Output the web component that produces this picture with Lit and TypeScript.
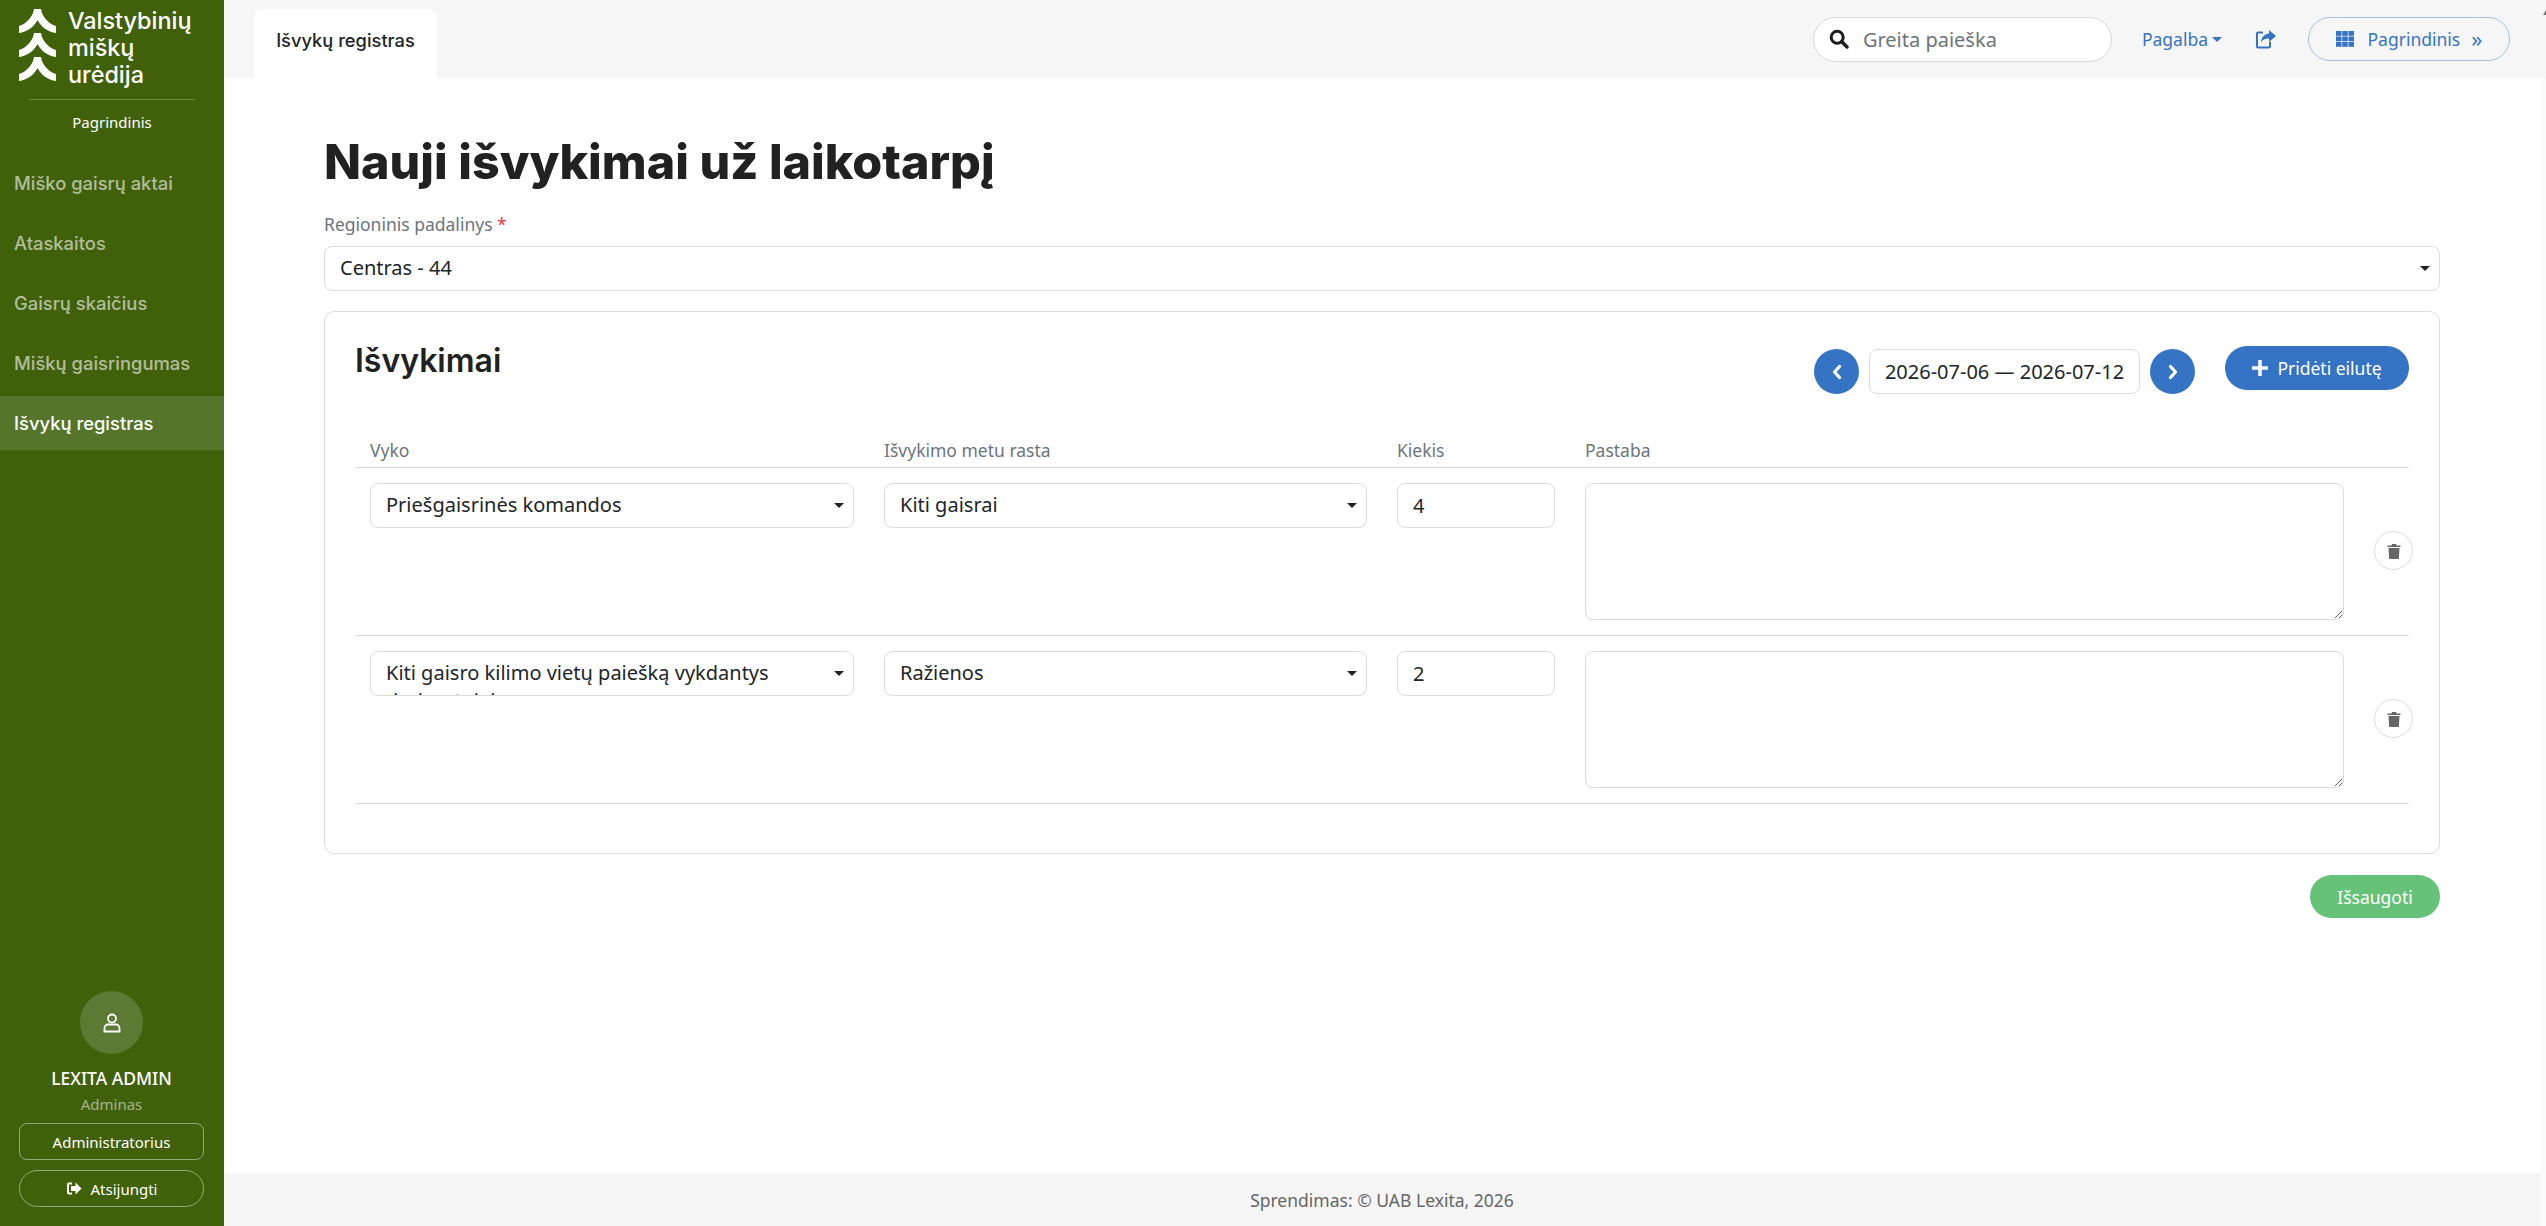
import { LitElement, html, css, svg } from "lit";
import { customElement } from "lit/decorators.js";

interface Row {
  who: string;
  found: string;
  count: string;
}

const ROWS: Array<Row> = [
  { who: "Priešgaisrinės komandos", found: "Kiti gaisrai", count: "4" },
  {
    who: "Kiti gaisro kilimo vietų paiešką vykdantys darbuotojai",
    found: "Ražienos",
    count: "2",
  },
];

const NAV = [
  "Miško gaisrų aktai",
  "Ataskaitos",
  "Gaisrų skaičius",
  "Miškų gaisringumas",
  "Išvykų registras",
];

const chevron = (y: number) =>
  svg`<path transform="translate(0 ${y})" d="M15 0H22C23 8 30 15 37 17V24C29 23 22 18 18.5 11C15 18 8 23 0 24V17C7 15 14 8 15 0Z"/>`;

const logo = html`<svg class="logo-mark" viewBox="0 0 37 72" fill="#fff">
  ${chevron(0)}${chevron(24)}${chevron(48)}
</svg>`;

const searchIcon = html`<svg width="20" height="20" viewBox="0 0 20 20" fill="none" stroke="#1c1c1c">
  <circle cx="8.2" cy="8.2" r="6" stroke-width="3" />
  <path d="M12.8 12.8L18 18" stroke-width="3.4" stroke-linecap="round" />
</svg>`;

const shareIcon = html`<svg width="21" height="19" viewBox="0 0 21 19" fill="#3574c4">
  <path d="M1 3.5A2 2 0 0 1 3 1.5H8V3.5H3V16.5H14V12H16V16.5A2 2 0 0 1 14 18.5H3A2 2 0 0 1 1 16.5Z" />
  <path d="M14 0L21 6L14 12V8.5C10 8.5 7.5 9.5 6 13C6 8 9 4 14 3.5Z" />
</svg>`;

const gridIcon = html`<svg width="18" height="16" viewBox="0 0 18 16" fill="#3574c4">
  ${[0, 5.5, 11].map((y) =>
    [0, 6.25, 12.5].map((x) => svg`<rect x=${x} y=${y} width="5.5" height="4.8" />`)
  )}
</svg>`;

const trashIcon = html`<svg width="14" height="16" viewBox="0 0 14 16" fill="#666">
  <path d="M0.5 2.5H4.5L5 1H9L9.5 2.5H13.5V4H0.5Z" />
  <path d="M1.5 5H12.5L11.8 16H2.2Z" />
</svg>`;

const chevronIcon = (left: boolean) =>
  html`<svg width="12" height="16" viewBox="0 0 12 16" fill="none" stroke="#fff" stroke-width="3.2" stroke-linecap="round" stroke-linejoin="round">
    <path d=${left ? "M8.5 2.5L3.5 8L8.5 13.5" : "M3.5 2.5L8.5 8L3.5 13.5"} />
  </svg>`;

const userIcon = html`<svg width="18" height="20" viewBox="0 0 18 20" fill="none" stroke="#fff" stroke-width="1.8">
  <circle cx="9" cy="5.5" r="4" />
  <path d="M5 11.5H13A3.5 3.5 0 0 1 16.5 15V18.5H1.5V15A3.5 3.5 0 0 1 5 11.5Z" />
</svg>`;

const logoutIcon = html`<svg width="16" height="13" viewBox="0 0 16 13" fill="#fff">
  <path d="M1 2.5A2 2 0 0 1 3 .5H6V2.5H3V10.5H6V12.5H3A2 2 0 0 1 1 10.5Z" />
  <path d="M9.5 0.5L15.5 6.5L9.5 12.5V9H5V4H9.5Z" />
</svg>`;

const plusIcon = html`<svg width="16" height="16" viewBox="0 0 16 16" fill="#fff">
  <path d="M6.3 0H9.7V6.3H16V9.7H9.7V16H6.3V9.7H0V6.3H6.3Z" />
</svg>`;

@customElement("app-root")
export class AppRoot extends LitElement {
  static styles = css`
    :host {
      display: flex;
      position: relative;
      min-height: 100vh;
      font-family: "Noto Sans", sans-serif;
      font-size: 17.5px;
      color: #212529;
      background: #fafafa;
    }
    * {
      box-sizing: border-box;
    }

    /* sidebar */
    .sidebar {
      width: 224px;
      flex: none;
      height: 1226px;
      display: flex;
      flex-direction: column;
      background: #41600a;
      color: #fff;
    }
    .brand {
      display: flex;
      align-items: flex-start;
      gap: 12px;
      padding: 9px 0 0 19px;
      height: 99px;
    }
    .logo-mark {
      width: 37px;
      height: 72px;
      flex: none;
    }
    .brand-text {
      font-family: Inter, sans-serif;
      font-weight: 500;
      font-size: 23.4px;
      line-height: 27px;
      margin-top: -2px;
    }
    .section {
      margin: 0 29px;
      border-top: 1px solid rgba(255, 255, 255, 0.25);
      padding-top: 11px;
      text-align: center;
      font-size: 15px;
      line-height: 22px;
      height: 57px;
    }
    .nav {
      display: flex;
      flex-direction: column;
      gap: 6px;
    }
    .nav a {
      height: 54px;
      display: flex;
      align-items: center;
      padding-left: 14px;
      font-family: Inter, sans-serif;
      font-weight: 500;
      font-size: 18.4px;
      color: rgba(255, 255, 255, 0.6);
    }
    .nav a.active {
      background: #55752a;
      color: #fff;
    }
    .profile {
      margin-top: auto;
      padding: 0 20px 19px 19px;
      display: flex;
      flex-direction: column;
      align-items: center;
    }
    .avatar {
      width: 63px;
      height: 63px;
      border-radius: 50%;
      background: #5c7a33;
      display: flex;
      align-items: center;
      justify-content: center;
    }
    .name {
      margin-top: 11px;
      font-size: 17.5px;
      font-weight: 500;
      line-height: 26px;
    }
    .role {
      font-size: 15px;
      line-height: 22px;
      margin-top: 2px;
      color: rgba(255, 255, 255, 0.55);
    }
    .side-btn {
      width: 100%;
      height: 37px;
      margin-top: 8px;
      border: 1px solid rgba(255, 255, 255, 0.45);
      border-radius: 8px;
      display: flex;
      align-items: center;
      justify-content: center;
      gap: 9px;
      font-size: 15px;
    }
    .side-btn.pill {
      border-radius: 19px;
      margin-top: 10px;
    }

    /* main column */
    .main {
      width: 2316px;
      flex: none;
      height: 1226px;
      display: flex;
      flex-direction: column;
      background: #fff;
    }
    .topbar {
      height: 78px;
      flex: none;
      margin-right: -6px;
      background: #f6f6f6;
      display: flex;
      align-items: flex-end;
      padding-left: 30px;
    }
    .tab {
      width: 183px;
      height: 69px;
      background: #fff;
      border-radius: 8px 8px 0 0;
      display: flex;
      align-items: center;
      justify-content: center;
      padding-bottom: 8px;
      font-family: Inter, sans-serif;
      font-weight: 500;
      font-size: 18.3px;
    }
    .tools {
      margin-left: auto;
      height: 78px;
      display: flex;
      align-items: center;
      color: #3574c4;
      padding-right: 36px;
    }
    .search {
      width: 299px;
      height: 45px;
      background: #fff;
      border: 1px solid #d9d9d9;
      border-radius: 23px;
      display: flex;
      align-items: center;
      gap: 14px;
      padding-left: 15px;
      color: #6c757d;
      font-size: 20px;
    }
    .help {
      margin-left: 30px;
      display: flex;
      align-items: center;
      gap: 4px;
    }
    .help i {
      border-top: 5px solid #3574c4;
      border-left: 5px solid transparent;
      border-right: 5px solid transparent;
    }
    .share {
      margin-left: 33px;
      display: flex;
    }
    .home {
      margin-left: 32px;
      width: 202px;
      height: 44px;
      border: 1px solid #a5c1e6;
      border-radius: 22px;
      display: flex;
      align-items: center;
      justify-content: center;
      gap: 14px;
    }
    .home span {
      font-size: 22px;
      line-height: 22px;
      margin: -3px 0 0 -3px;
    }
    .corner {
      position: absolute;
      top: 10px;
      right: 0;
      width: 3px;
      height: 5px;
      background: #777;
      clip-path: polygon(100% 0, 100% 100%, 0 100%);
    }

    /* content */
    .content {
      flex: 1;
      padding: 0 100px;
    }
    h1 {
      margin: 52px 0 0;
      font-family: Inter, sans-serif;
      font-weight: 800;
      font-size: 48.4px;
      line-height: 64px;
      color: #212121;
    }
    .label {
      margin-top: 19px;
      height: 33px;
      line-height: 22px;
      color: #6c757d;
    }
    .label b {
      color: #e53e4d;
      font-weight: 400;
    }
    .select {
      position: relative;
      height: 45px;
      border: 1px solid #dcdcdc;
      border-radius: 8px;
      background: #fff;
      padding: 7px 36px 0 15px;
      line-height: 28px;
      font-size: 20px;
      overflow: hidden;
    }
    .select::after {
      content: "";
      position: absolute;
      right: 9px;
      top: 19px;
      border-top: 5px solid #222;
      border-left: 5px solid transparent;
      border-right: 5px solid transparent;
    }
    .card {
      margin-top: 20px;
      height: 543px;
      border: 1px solid #dcdcdc;
      border-radius: 10px;
      padding: 0 30px;
    }
    .card-head {
      height: 117px;
      display: flex;
      align-items: flex-start;
    }
    h2 {
      margin: 27px 0 0;
      font-family: Inter, sans-serif;
      font-weight: 600;
      font-size: 32px;
      line-height: 44px;
      color: #212121;
    }
    .range {
      margin: 37px 0 0 auto;
      display: flex;
      align-items: center;
      gap: 10px;
    }
    .round {
      width: 45px;
      height: 45px;
      border-radius: 50%;
      background: #3574c4;
      display: flex;
      align-items: center;
      justify-content: center;
    }
    .dates {
      width: 271px;
      height: 45px;
      border: 1px solid #dcdcdc;
      border-radius: 8px;
      display: flex;
      align-items: center;
      justify-content: center;
      font-size: 20px;
    }
    .add {
      margin: 34px 0 0 30px;
      width: 184px;
      height: 44px;
      border-radius: 22px;
      background: #3574c4;
      color: #fff;
      display: flex;
      align-items: center;
      justify-content: center;
      gap: 9px;
    }
    .grid {
      display: grid;
      grid-template-columns: 514px 513px 188px 789px 50px;
    }
    .th {
      padding: 6px 15px 0;
      height: 39px;
      line-height: 30px;
      color: #6c757d;
      border-bottom: 1px solid #dcdcdc;
    }
    .td {
      padding: 15px 15px 0;
      height: 168px;
      border-bottom: 1px solid #dcdcdc;
    }
    .td.last {
      padding: 0;
      position: relative;
    }
    input,
    textarea {
      display: block;
      width: 100%;
      border: 1px solid #dcdcdc;
      border-radius: 8px;
      background: #fff;
      font: inherit;
      font-size: 20px;
      color: #212529;
      outline: none;
    }
    input {
      height: 45px;
      padding: 0 15px;
    }
    textarea {
      height: 137px;
      padding: 8px 15px;
      resize: vertical;
    }
    .del {
      position: absolute;
      left: 15px;
      top: 63px;
      width: 39px;
      height: 39px;
      border: 1px solid #dcdcdc;
      border-radius: 50%;
      background: #fff;
      display: flex;
      align-items: center;
      justify-content: center;
    }
    .actions {
      display: flex;
      justify-content: flex-end;
      margin-top: 21px;
    }
    .save {
      width: 130px;
      height: 43px;
      border-radius: 22px;
      background: #66c279;
      color: #fff;
      display: flex;
      align-items: center;
      justify-content: center;
    }
    footer {
      height: 53px;
      flex: none;
      background: #f5f5f5;
      display: flex;
      align-items: center;
      justify-content: center;
      color: #666;
    }
  `;

  renderRow(row: Row) {
    return html`<div class="td"><div class="select">${row.who}</div></div>
      <div class="td"><div class="select">${row.found}</div></div>
      <div class="td"><input .value=${row.count} /></div>
      <div class="td"><textarea></textarea></div>
      <div class="td last"><div class="del">${trashIcon}</div></div>`;
  }

  render() {
    return html`<aside class="sidebar">
        <div class="brand">
          ${logo}
          <div class="brand-text">Valstybinių<br />miškų<br />urėdija</div>
        </div>
        <div class="section">Pagrindinis</div>
        <nav class="nav">
          ${NAV.map(
            (item, i) =>
              html`<a class=${i === NAV.length - 1 ? "active" : ""}>${item}</a>`
          )}
        </nav>
        <div class="profile">
          <div class="avatar">${userIcon}</div>
          <div class="name">LEXITA ADMIN</div>
          <div class="role">Adminas</div>
          <div class="side-btn">Administratorius</div>
          <div class="side-btn pill">${logoutIcon}Atsijungti</div>
        </div>
      </aside>
      <div class="main">
        <header class="topbar">
          <div class="tab">Išvykų registras</div>
          <div class="tools">
            <div class="search">${searchIcon}Greita paieška</div>
            <div class="help">Pagalba<i></i></div>
            <div class="share">${shareIcon}</div>
            <div class="home">${gridIcon}Pagrindinis <span>»</span></div>
          </div>
        </header>
        <main class="content">
          <h1>Nauji išvykimai už laikotarpį</h1>
          <div class="label">Regioninis padalinys <b>*</b></div>
          <div class="select">Centras - 44</div>
          <section class="card">
            <div class="card-head">
              <h2>Išvykimai</h2>
              <div class="range">
                <div class="round">${chevronIcon(true)}</div>
                <div class="dates">2026-07-06 — 2026-07-12</div>
                <div class="round">${chevronIcon(false)}</div>
              </div>
              <div class="add">${plusIcon}Pridėti eilutę</div>
            </div>
            <div class="grid">
              <div class="th">Vyko</div>
              <div class="th">Išvykimo metu rasta</div>
              <div class="th">Kiekis</div>
              <div class="th">Pastaba</div>
              <div class="th"></div>
              ${ROWS.map((row) => this.renderRow(row))}
            </div>
          </section>
          <div class="actions"><div class="save">Išsaugoti</div></div>
        </main>
        <footer>Sprendimas: © UAB Lexita, 2026</footer>
      </div>
      <div class="corner"></div>`;
  }
}
